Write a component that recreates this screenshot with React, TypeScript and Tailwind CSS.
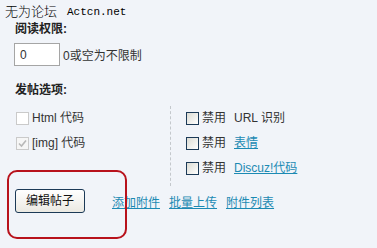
import React from "react";

const Box = ({ variant }: { variant: "light" | "checked" | "xp" }) => {
  if (variant === "xp") {
    return (
      <span className="inline-block w-[13px] h-[13px] border border-[#1c3a57] bg-gradient-to-br from-[#dcdcd4] to-[#ffffff] shrink-0" />
    );
  }
  if (variant === "checked") {
    return (
      <span className="inline-flex items-center justify-center w-[13px] h-[13px] border border-[#cacaca] bg-[#f6f6f6] shrink-0">
        <svg width="9" height="9" viewBox="0 0 9 9">
          <path d="M1 4.5 L3.5 7 L8 1.5" fill="none" stroke="#b8b8b8" strokeWidth="1.6" />
        </svg>
      </span>
    );
  }
  return <span className="inline-block w-[13px] h-[13px] border border-[#cacaca] bg-white shrink-0" />;
};

export default function App() {
  return (
    <div
      className="relative w-[377px] h-[248px] overflow-hidden bg-[#f1f4f9] text-[12px] leading-none text-[#333]"
      style={{ fontFamily: '"Liberation Sans", "Noto Sans CJK SC", sans-serif' }}
    >
      <div className="absolute left-[5px] top-[5px] flex items-end gap-[10px] text-black">
        <span className="text-[13px] font-light">无为论坛</span>
        <span className="text-[11px]" style={{ fontFamily: '"Liberation Mono", monospace' }}>Actcn.net</span>
      </div>

      <div className="flex flex-col pl-[15px] pt-[23px]">
        <div className="font-bold text-[12px] h-[13px] text-[#222]">阅读权限:</div>
        <div className="flex items-center mt-[7px] -ml-[1px]">
          <div className="w-[46px] h-[23px] border border-[#a5a5a5] bg-white flex items-center pl-[5px] text-[#333]">0</div>
          <span className="ml-[3px] mt-[3px]">0或空为不限制</span>
        </div>
        <div className="font-bold mt-[18px] h-[13px] text-[#222]">发帖选项:</div>

        <div className="flex mt-[9px]">
          <div className="flex flex-col w-[155px] pt-[5px] pl-[1px] gap-[11px]">
            <div className="flex items-center gap-[3px] h-[14px]">
              <Box variant="light" />
              <span>Html 代码</span>
            </div>
            <div className="flex items-center gap-[3px] h-[14px]">
              <Box variant="checked" />
              <span>[img] 代码</span>
            </div>
          </div>
          <div className="w-0 h-[80px] border-l border-dashed border-[#c4c8cc]" />
          <div className="flex flex-col pl-[15px] pt-[5px] gap-[11px]">
            <div className="flex items-center h-[14px]">
              <Box variant="xp" />
              <span className="ml-[3px]">禁用</span>
              <span className="ml-[8px]">URL 识别</span>
            </div>
            <div className="flex items-center h-[14px]">
              <Box variant="xp" />
              <span className="ml-[3px]">禁用</span>
              <a className="ml-[8px] text-[#1c8ab3] underline">表情</a>
            </div>
            <div className="flex items-center h-[14px]">
              <Box variant="xp" />
              <span className="ml-[3px]">禁用</span>
              <a className="ml-[8px] text-[#1c8ab3] underline">Discuz!代码</a>
            </div>
          </div>
        </div>

        <div className="flex items-center mt-[3px]">
          <button className="w-[70px] h-[24px] border border-[#1c3a57] rounded-[3px] bg-gradient-to-b from-[#ffffff] to-[#ebe9e2] text-[12px] text-[#111]">
            编辑帖子
          </button>
          <div className="flex gap-[9px] ml-[27px] mt-[3px] text-[#1c8ab3]">
            <a className="underline">添加附件</a>
            <a className="underline">批量上传</a>
            <a className="underline">附件列表</a>
          </div>
        </div>
      </div>

      <div className="absolute left-[7px] top-[170px] w-[120px] h-[69px] border-2 border-[#b8121c] rounded-[10px]" />
    </div>
  );
}
